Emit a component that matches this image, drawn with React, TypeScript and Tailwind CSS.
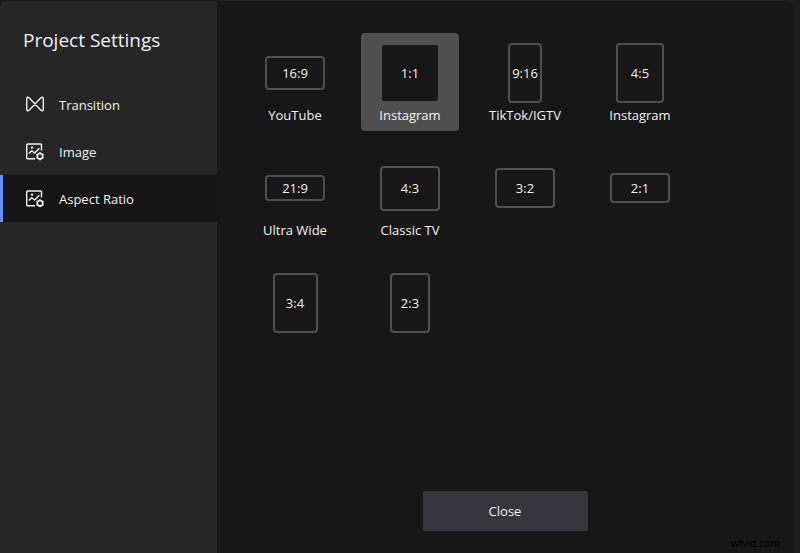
import { useState, type ReactNode } from 'react';
import clsx from 'clsx';

interface Ratio {
  id: string;
  label?: string;
  box: string;
}

interface Section {
  id: string;
  label: string;
  icon: ReactNode;
}

// Box sizes keep the longest side at 60px
const ratios: Ratio[] = [
  { id: '16:9', label: 'YouTube', box: 'w-[60px] h-[34px]' },
  { id: '1:1', label: 'Instagram', box: 'w-[60px] h-[60px]' },
  { id: '9:16', label: 'TikTok/IGTV', box: 'w-[34px] h-[60px]' },
  { id: '4:5', label: 'Instagram', box: 'w-[48px] h-[60px]' },
  { id: '21:9', label: 'Ultra Wide', box: 'w-[60px] h-[26px]' },
  { id: '4:3', label: 'Classic TV', box: 'w-[60px] h-[45px]' },
  { id: '3:2', box: 'w-[60px] h-[40px]' },
  { id: '2:1', box: 'w-[60px] h-[30px]' },
  { id: '3:4', box: 'w-[45px] h-[60px]' },
  { id: '2:3', box: 'w-[40px] h-[60px]' },
];

function TransitionIcon() {
  return (
    <svg
      className="size-5"
      viewBox="0 0 20 20"
      fill="none"
      stroke="currentColor"
      strokeWidth="1.4"
      strokeLinejoin="round"
      aria-hidden="true"
    >
      <path d="M1.7 3.600v10.800c0 1.500 1.400 1.700 2.300.8L16 2.800c.9-.9 2.300-.7 2.300.8v10.800c0 1.500-1.400 1.700-2.300.8L4 2.800c-.9-.9-2.300-.7-2.300.8z" />
    </svg>
  );
}

function ImageGearIcon() {
  return (
    <svg
      className="size-5"
      viewBox="0 0 20 20"
      fill="none"
      stroke="currentColor"
      strokeWidth="1.4"
      strokeLinejoin="round"
      aria-hidden="true"
    >
      <path d="M16.5 8.5V2.9a.9.9 0 0 0-.9-.9H2.600a.9.9 0 0 0-.9.9v13a.9.9 0 0 0 .9.9H10" />
      <path d="M3.800 11.600l3-2.900 2.800 2.300 4.800-4.800" />
      <circle cx="7" cy="5.600" r="1.200" fill="currentColor" stroke="none" />
      <circle cx="15" cy="14.200" r="2.700" strokeWidth="1.600" />
      <path
        d="M15 10.200v1.300M15 16.900v1.300M11.500 12.200l1.200.7M17.300 15.500l1.200.7M11.500 16.200l1.200-.7M17.300 12.900l1.200-.7"
        strokeWidth="1.500"
      />
    </svg>
  );
}

const sections: Section[] = [
  { id: 'transition', label: 'Transition', icon: <TransitionIcon /> },
  { id: 'image', label: 'Image', icon: <ImageGearIcon /> },
  { id: 'aspect', label: 'Aspect Ratio', icon: <ImageGearIcon /> },
];

export default function App() {
  const [section, setSection] = useState('aspect');
  const [ratio, setRatio] = useState('1:1');

  return (
    <div className="relative flex min-h-screen bg-[#1d1d1d] pt-px pr-[7px] font-['Open_Sans',sans-serif] text-[13px] leading-5 text-[#f2f2f2]">
      <aside className="w-[217px] shrink-0 rounded-tl-lg bg-[#262626]">
        <h1 className="px-[23px] pt-[25px] text-[19px] leading-7">Project Settings</h1>
        <nav className="mt-[27px]">
          {sections.map((item) => (
            <button
              key={item.id}
              type="button"
              aria-current={section === item.id ? 'page' : undefined}
              onClick={() => setSection(item.id)}
              className={clsx(
                'flex h-[47px] w-full items-center gap-[14px] border-l-3 pl-[22px] text-left',
                section === item.id ? 'border-[#6690f5] bg-[#161616]' : 'border-transparent'
              )}
            >
              {item.icon}
              {item.label}
            </button>
          ))}
        </nav>
      </aside>

      <main className="flex flex-1 flex-col rounded-tr-lg bg-[#171717] px-[29px] pt-8 pb-[22px]">
        <div className="flex flex-wrap gap-[17px]">
          {ratios.map((item) => (
            <button
              key={item.id}
              type="button"
              aria-pressed={ratio === item.id}
              onClick={() => setRatio(item.id)}
              className={clsx(
                'flex size-[98px] flex-col items-center rounded-sm pt-[10px]',
                ratio === item.id && 'bg-[#4f4f4f]'
              )}
            >
              <span className="flex h-[60px] items-center">
                <span
                  className={clsx(
                    'flex items-center justify-center rounded-sm border-2 border-[#4f4f4f] bg-[#171717]',
                    item.box
                  )}
                >
                  {item.id}
                </span>
              </span>
              <span className="mt-[2px] whitespace-nowrap">{item.label}</span>
            </button>
          ))}
        </div>

        <button
          type="button"
          className="mt-auto h-10 w-[165px] self-center rounded-xs bg-[#36353b]"
        >
          Close
        </button>
      </main>

      <span className="absolute right-5 bottom-0 font-['Liberation_Sans',sans-serif] text-[11px] text-black">
        wtvid.com
      </span>
    </div>
  );
}
